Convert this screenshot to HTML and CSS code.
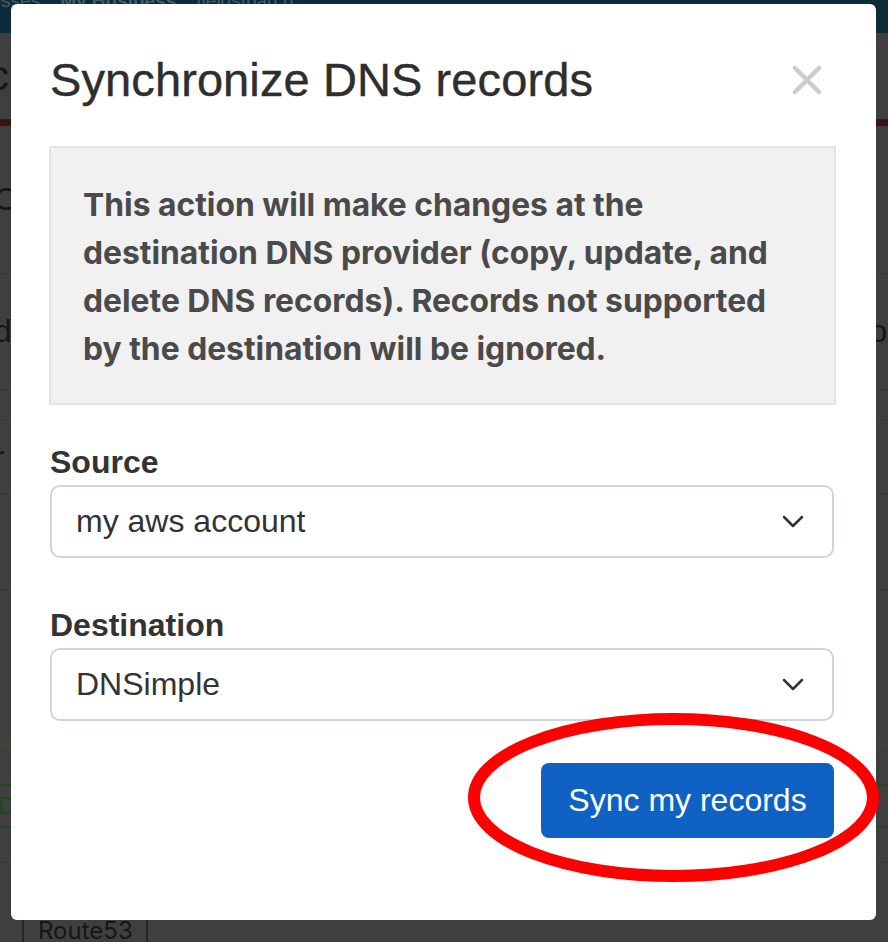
FILE: index.html
```html
<!DOCTYPE html>
<html lang="en">
<head>
<meta charset="utf-8">
<title>Synchronize DNS records</title>
<link rel="stylesheet" href="styles.css">
</head>
<body>
<div class="page">
  <div class="topbar"><span class="tb-a">Businesses</span><span class="tb-b">My Business</span><span class="tb-c">fieldstparch</span></div>
  <div class="row r-title"><span class="frag big">c</span></div>
  <div class="row r-red"></div>
  <div class="row r1"><span class="frag">O</span></div>
  <div class="row r2"><span class="frag">d</span><span class="frag right">or</span></div>
  <div class="row r3"></div>
  <div class="row r4"><span class="frag">r</span></div>
  <div class="row r5"></div>
  <div class="row r6"></div>
  <div class="row r7"></div>
  <div class="row r8"><span class="frag green">D</span></div>
  <div class="row r9"></div>
  <div class="row r10"><span class="route">Route53</span></div>
</div>

<div class="modal">
  <div class="modal-header">
    <h1 class="modal-title">Synchronize DNS records</h1>
    <svg class="close" width="30" height="30" viewBox="0 0 30 30" aria-label="Close">
      <line x1="3" y1="3" x2="27" y2="27" />
      <line x1="27" y1="3" x2="3" y2="27" />
    </svg>
  </div>
  <div class="callout">This action will make changes at the destination DNS provider (copy, update, and delete DNS records). Records not supported by the destination will be ignored.</div>
  <div class="field">
    <div class="label">Source</div>
    <div class="select"><span>my aws account</span>
      <svg class="chev" width="22" height="13" viewBox="0 0 22 13"><polyline points="2,2 11,11 20,2"/></svg>
    </div>
  </div>
  <div class="field field-2">
    <div class="label">Destination</div>
    <div class="select"><span>DNSimple</span>
      <svg class="chev" width="22" height="13" viewBox="0 0 22 13"><polyline points="2,2 11,11 20,2"/></svg>
    </div>
  </div>
  <div class="footer">
    <div class="btn">Sync my records</div>
  </div>
</div>

<svg class="ring" width="424" height="182" viewBox="0 0 424 182">
  <ellipse cx="211.5" cy="90.5" rx="199.5" ry="78.5" />
</svg>
</body>
</html>
```

FILE: styles.css
```css
html, body {
  margin: 0;
  padding: 0;
}
body {
  width: 888px;
  height: 942px;
  overflow: hidden;
  position: relative;
  background: #3f3f3f;
  font-family: "Liberation Sans", Arial, sans-serif;
}

/* dimmed background page */
.page {
  display: flex;
  flex-direction: column;
  width: 888px;
  height: 942px;
  overflow: hidden;
  color: #151515;
}
.topbar {
  height: 33px;
  background: #0d2c3a;
  display: flex;
  align-items: flex-end;
  gap: 20px;
  overflow: hidden;
  color: #4a5b63;
  font-size: 19px;
  line-height: 22px;
}
.topbar span { margin-bottom: 21px; }
.tb-a { margin-left: -57px; }
.tb-b { font-weight: bold; }
.row {
  display: flex;
  justify-content: space-between;
  align-items: center;
  overflow: hidden;
  border-bottom: 1px solid #363636;
  box-sizing: border-box;
}
.frag {
  font-size: 32px;
  line-height: 32px;
  margin-left: -6px;
}
.frag.right { margin-right: -10px; }
.frag.big { font-size: 42px; margin-left: -12px; }
.frag.green {
  color: #1d4a1d;
  margin-left: -2px;
  font-size: 24px;
}
.r-title { height: 87px; border-bottom: none; }
.r-red { height: 7px; background: #3a1313; border-bottom: none; }
.r1 { height: 149px; }
.r2 { height: 117px; }
.r3 { height: 31px; }
.r4 { height: 74px; }
.r5 { height: 97px; }
.r6 { height: 157px; border-bottom: 3px solid #4f4420; }
.r7 { height: 41px; border-bottom: 2px solid #1d4a1d; }
.r8 { height: 42px; border-bottom: 2px solid #1d4a1d; }
.r9 { height: 35px; }
.r10 {
  height: 80px;
  border-bottom: none;
  align-items: flex-start;
}
.route {
  margin-left: 22px;
  padding: 55px 13px 0 14px;
  border-left: 2px solid #262626;
  border-right: 2px solid #262626;
  font-family: Inter, "Liberation Sans", sans-serif;
  font-size: 24px;
  line-height: 26px;
  color: #161616;
}

/* modal */
.modal {
  position: absolute;
  left: 11px;
  top: 4px;
  width: 865px;
  height: 916px;
  box-sizing: border-box;
  background: #ffffff;
  border-radius: 6px;
  padding: 48px 42px 0 39px;
  display: flex;
  flex-direction: column;
}
.modal-header {
  display: flex;
  justify-content: space-between;
  align-items: center;
}
.modal-title {
  margin: 0;
  font-size: 47px;
  line-height: 55px;
  font-weight: normal;
  color: #2e2e2e;
  letter-spacing: 0.1px;
  -webkit-text-stroke: 0.4px #2e2e2e;
}
.close {
  margin-right: 12px;
  margin-top: 1px;
}
.close line {
  stroke: #cccccc;
  stroke-width: 4.5;
  stroke-linecap: round;
}
.callout {
  margin: 39px -2px 0 -1px;
  background: #f1f1f1;
  border: 2px solid #e4e4e4;
  padding: 33px 40px 30px 32px;
  height: 259px;
  box-sizing: border-box;
  font-family: Inter, "Liberation Sans", sans-serif;
  font-weight: 700;
  font-size: 31.8px;
  line-height: 48px;
  color: #4a4a4a;
}
.field {
  margin-top: 38px;
  display: flex;
  flex-direction: column;
  gap: 4px;
}
.field-2 { margin-top: 48px; }
.label {
  font-size: 32px;
  line-height: 38px;
  font-weight: bold;
  color: #333333;
}
.select {
  height: 73px;
  box-sizing: border-box;
  border: 2px solid #cfd4da;
  border-radius: 10px;
  padding: 0 28px 0 24px;
  display: flex;
  align-items: center;
  justify-content: space-between;
  font-size: 32px;
  color: #333333;
}
.chev polyline {
  fill: none;
  stroke: #333333;
  stroke-width: 2.5;
  stroke-linecap: round;
  stroke-linejoin: round;
}
.footer {
  margin-top: 42px;
  display: flex;
  justify-content: flex-end;
}
.btn {
  width: 293px;
  height: 75px;
  box-sizing: border-box;
  background: #0f62c3;
  border-radius: 8px;
  color: #ffffff;
  font-size: 32px;
  display: flex;
  align-items: center;
  justify-content: center;
}

/* red annotation ring overlaying the button */
.ring {
  position: absolute;
  left: 462px;
  top: 707px;
}
.ring ellipse {
  fill: none;
  stroke: #ff0000;
  stroke-width: 12;
}
```
